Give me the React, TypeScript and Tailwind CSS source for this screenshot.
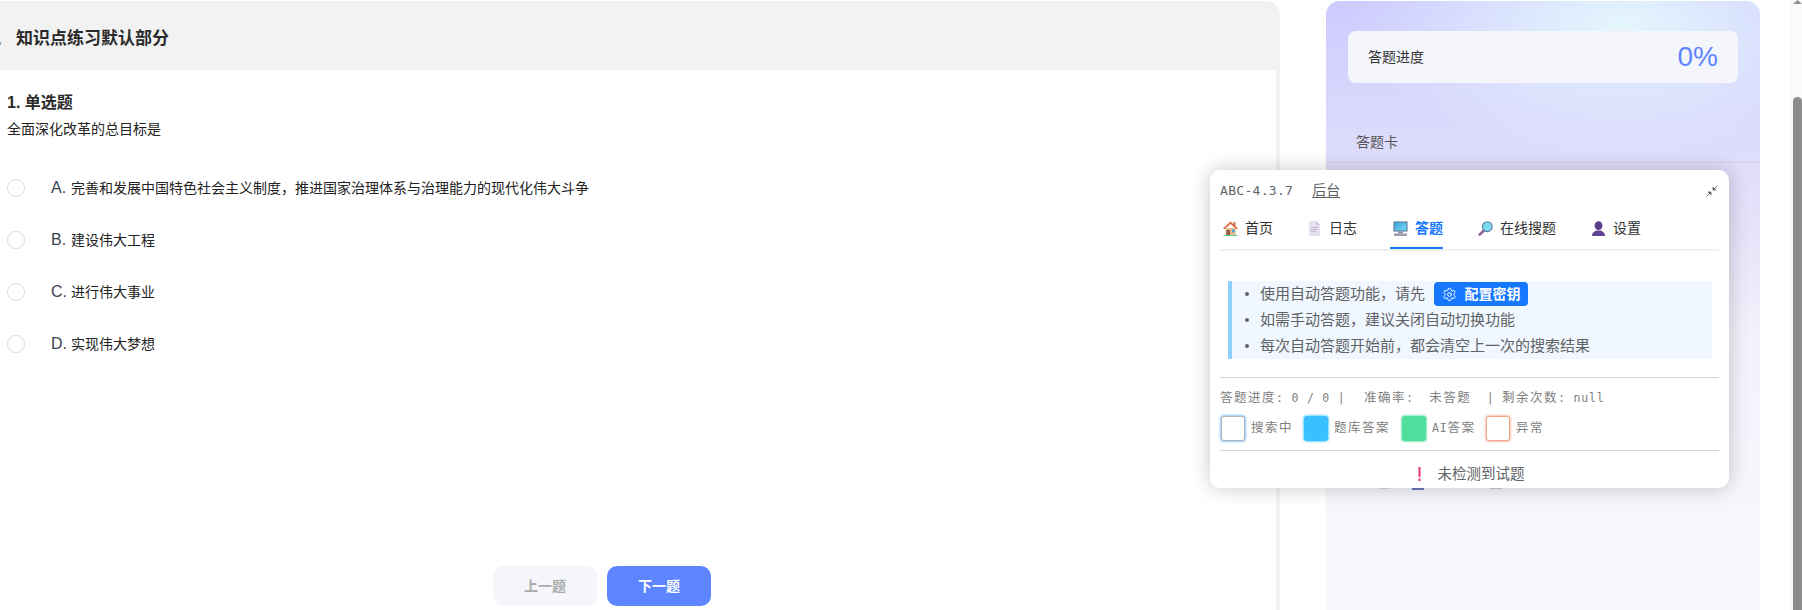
import { Settings } from 'lucide-react';

const sans = "font-['Liberation_Sans','Noto_Sans_CJK_SC',sans-serif]";
const mono = "font-['DejaVu_Sans_Mono','Noto_Sans_CJK_SC',monospace]";

const options = [
  { label: 'A.', text: '完善和发展中国特色社会主义制度，推进国家治理体系与治理能力的现代化伟大斗争' },
  { label: 'B.', text: '建设伟大工程' },
  { label: 'C.', text: '进行伟大事业' },
  { label: 'D.', text: '实现伟大梦想' },
];

function HouseIcon() {
  return (
    <svg width="15" height="15" viewBox="0 0 15 15">
      <rect x="0.5" y="13.8" width="14" height="1.2" fill="#5fd38a" />
      <rect x="10.5" y="1" width="2" height="4" fill="#c9744f" />
      <path d="M2.5 7h10v7h-10z" fill="#ecb88e" />
      <path d="M0 7.5L7.5 0.5L15 7.5L13.4 8.2L7.5 3L1.6 8.2z" fill="#de6a44" />
      <rect x="3.5" y="9" width="3.5" height="5" fill="#8a5a44" />
      <rect x="9" y="8.5" width="2.8" height="2.8" fill="#4aa8e0" />
    </svg>
  );
}

function DocIcon() {
  return (
    <svg width="15" height="15" viewBox="0 0 15 15">
      <path d="M2 0h7l4 4v11H2z" fill="#e6e0f0" />
      <path d="M9 0l4 4H9z" fill="#cfc6e0" />
      <path d="M4 6.5h7M4 8.5h7M4 10.5h5" stroke="#c3bad6" strokeWidth="1" />
    </svg>
  );
}

function MonitorIcon() {
  return (
    <svg width="15" height="15" viewBox="0 0 15 15">
      <defs>
        <linearGradient id="screen" x1="0" y1="0" x2="1" y2="1">
          <stop offset="0" stopColor="#3fa6dc" />
          <stop offset="1" stopColor="#7ad6f6" />
        </linearGradient>
      </defs>
      <rect x="0.5" y="0.5" width="14" height="10" fill="#4a6f8c" />
      <rect x="1.5" y="1.5" width="12" height="8" fill="url(#screen)" />
      <path d="M5 10.5h5v2H5z" fill="#8d93a8" />
      <rect x="1" y="12.5" width="13" height="2.5" fill="#9a9cb2" />
    </svg>
  );
}

function SearchIcon() {
  return (
    <svg width="15" height="15" viewBox="0 0 15 15">
      <path d="M6 9.5L1.6 13.6" stroke="#9a5da0" strokeWidth="2.6" strokeLinecap="round" />
      <circle cx="9.3" cy="5.7" r="4.9" fill="#7ad8f0" stroke="#5a7f9c" strokeWidth="1.1" />
    </svg>
  );
}

function PersonIcon() {
  return (
    <svg width="15" height="15" viewBox="0 0 15 15">
      <ellipse cx="7.5" cy="4.6" rx="3.9" ry="4.4" fill="#5a3d8a" />
      <path d="M1 15c0-3.2 2.5-4.6 4.5-5.4h4c2 .8 4.5 2.2 4.5 5.4z" fill="#5f4392" />
    </svg>
  );
}

const tabs = [
  { label: '首页', icon: <HouseIcon />, width: 'w-[84px]' },
  { label: '日志', icon: <DocIcon />, width: 'w-[86px]' },
  { label: '答题', icon: <MonitorIcon />, width: 'w-[85px]', active: true },
  { label: '在线搜题', icon: <SearchIcon />, width: 'w-[113px]' },
  { label: '设置', icon: <PersonIcon />, width: 'w-[60px]' },
];

const legend = [
  { label: <>搜索中</>, box: 'bg-white border-[#b4b4b4] shadow-[0_0_2px_1px_#8fc7ff]', width: 'w-[83px]' },
  { label: <>题库答案</>, box: 'bg-[#39c0ff] border-[#39c0ff] shadow-[0_0_2px_1px_#7fd6ff]', width: 'w-[98px]' },
  { label: <><Latin>AI</Latin>答案</>, box: 'bg-[#50de9c] border-[#50de9c] shadow-[0_0_2px_1px_#8ce8bd]', width: 'w-[84px]' },
  { label: <>异常</>, box: 'bg-white border-[#f4a58c] shadow-[0_0_2px_1px_#fac4b2]', width: 'w-[60px]' },
];

function Latin({ children }: { children: React.ReactNode }) {
  return <span className="text-[11.5px] tracking-[0.8px]">{children}</span>;
}

function Question() {
  return (
    <div className="relative flex h-[610px] w-[1280px] shrink-0 flex-col pt-px">
      <div className="flex h-[69px] shrink-0 items-center rounded-tr-[14px] bg-[#f2f2f2] pt-[7px] pl-[16px] text-[17px] font-bold text-[#2a2a2a]">
        知识点练习默认部分
      </div>
      <span className="absolute top-[42px] left-0 h-[3px] w-px bg-[#7fa8c8]" />
      <div className="flex min-h-0 flex-1 flex-col border-r-4 border-[#f2f2f2] bg-white pl-[7px]">
        <div className="mt-[23px] text-[16px] leading-[20px] font-bold text-[#2a2a2a]">1. 单选题</div>
        <div className="mt-[7px] text-[14px] leading-[18px] text-[#222]">全面深化改革的总目标是</div>
        <div className="mt-[24px] flex flex-col">
          {options.map((o) => (
            <div key={o.label} className="flex h-[52px] items-center">
              <span className="h-[18px] w-[18px] rounded-full border border-[#d9d9d9] bg-white" />
              <span className="ml-[26px] w-[20px] text-[16px] text-[#3a4252]">{o.label}</span>
              <span className="text-[14px] text-[#222]">{o.text}</span>
            </div>
          ))}
        </div>
        <div className="mt-auto mb-[4px] flex gap-[10px] pl-[486px]">
          <button className="h-[40px] w-[104px] rounded-[10px] bg-[#f5f6fb] text-[14px] font-bold text-[#aaa]">上一题</button>
          <button className="h-[40px] w-[104px] rounded-[10px] bg-[#5c85ff] text-[14px] font-bold text-white">下一题</button>
        </div>
      </div>
    </div>
  );
}

function SidePanel() {
  return (
    <div className="ml-[46px] h-[610px] w-[434px] shrink-0 pt-px">
      <div className="h-full rounded-t-[14px] bg-[radial-gradient(270px_130px_at_68%_4%,#e4f6fd_0%,rgba(228,246,253,0)_100%),linear-gradient(to_bottom,#cdcbff_0px,#dedcfb_150px,#e6e3f9_230px,#f3f2fb_340px,#f8f8fe_100%)] pt-[30px]">
        <div className="mx-[22px] flex h-[52px] items-center justify-between rounded-[8px] bg-[#f5f6fb] px-[20px]">
          <span className="text-[14px] text-[#333]">答题进度</span>
          <span className="text-[28px] text-[#5c85ff]">0%</span>
        </div>
        <div className="mt-[49px] border-b border-[#cfd0e8] pb-[10px] pl-[30px] text-[14px] leading-[20px] text-[#555]">
          答题卡
        </div>
      </div>
    </div>
  );
}

function InfoRow({ children }: { children: React.ReactNode }) {
  return (
    <div className="flex h-[26px] items-center">
      <span className="mr-[11px] h-[4px] w-[4px] rounded-full bg-[#606266]" />
      {children}
    </div>
  );
}

function Popup() {
  return (
    <div className={`absolute top-[170px] left-[1210px] h-[318px] w-[519px] rounded-[10px] bg-white px-[10px] shadow-[0_0_20px_rgba(0,0,0,0.22)] ${sans}`}>
      <div className="flex h-[41px] items-center text-[14px] text-[#606266]">
        <span className={`${mono} text-[13px] tracking-[0.3px]`}>ABC-4.3.7</span>
        <span className="ml-[19px] underline underline-offset-2">后台</span>
        <svg className="mr-px ml-auto" width="12" height="12" viewBox="0 0 12 12" fill="#606266" stroke="#606266" strokeWidth="0.8">
          <path d="M7 5V2L10 5z" />
          <path d="M8 4L11.5 0.5" />
          <path d="M5 7V10L2 7z" />
          <path d="M4 8L0.5 11.5" />
        </svg>
      </div>
      <div className="flex h-[40px] items-start border-b-2 border-[#eff0f3] text-[14px] text-[#303133]">
        {tabs.map((t) => (
          <div key={t.label} className={`relative flex h-[38px] items-center gap-[7px] pb-[4px] pl-[3px] ${t.width} ${t.active ? 'font-bold text-[#1677ff]' : ''}`}>
            {t.icon}
            <span>{t.label}</span>
            {t.active && <span className="absolute bottom-0 left-0 h-[2px] w-[53px] bg-[#1677ff]" />}
          </div>
        ))}
      </div>
      <div className="mt-[30px] ml-[8px] w-[484px] border-l-4 border-[#91d0ff] bg-[#f0f7fe] pl-[13px] text-[15px] text-[#606266]">
        <InfoRow>
          <span>使用自动答题功能，请先</span>
          <span className="ml-[9px] flex h-[24px] w-[94px] items-center justify-center gap-[8px] rounded-[4px] bg-[#1677ff] text-[14px] font-bold text-white">
            <Settings size={15} strokeWidth={1.6} />
            配置密钥
          </span>
        </InfoRow>
        <InfoRow>
          <span>如需手动答题，建议关闭自动切换功能</span>
        </InfoRow>
        <InfoRow>
          <span>每次自动答题开始前，都会清空上一次的搜索结果</span>
        </InfoRow>
      </div>
      <div className={`mt-[18px] border-t border-[#d4d4d4] pt-[12px] ${mono} text-[12.5px] leading-[16px] tracking-[1.5px] whitespace-pre text-[#808080]`}>
        答题进度<Latin>: 0 / 0 |  </Latin><span className="ml-[3px]">准确率</span><Latin>:  </Latin>未答题<Latin>  | </Latin>剩余次数<Latin>: null</Latin>
      </div>
      <div className={`mt-[9px] ml-px flex h-[27px] items-center ${mono} text-[12.5px] tracking-[1.5px] text-[#808080]`}>
        {legend.map((l, i) => (
          <div key={i} className={`flex items-center gap-[6px] ${l.width}`}>
            <span className={`h-[25px] w-[24px] shrink-0 rounded-[3px] border ${l.box}`} />
            <span>{l.label}</span>
          </div>
        ))}
      </div>
      <div className="mt-[8px] flex items-center justify-center border-t border-[#d4d4d4] pt-[13px] pl-[3px] text-[14.5px] leading-[20px] text-[#606266]">
        <svg className="mr-[17px]" width="3" height="14" viewBox="0 0 3 14">
          <rect x="0.5" y="0" width="2" height="10" fill="#f0306a" />
          <rect x="0.5" y="11.5" width="2" height="2.5" fill="#f0306a" />
        </svg>
        未检测到试题
      </div>
    </div>
  );
}

export default function App() {
  return (
    <div className={`relative flex h-[610px] w-[1802px] overflow-hidden bg-white ${sans}`}>
      <Question />
      <SidePanel />
      <div className="relative ml-[30px] flex h-full w-[12px] flex-col bg-[#fafafa] pt-[97px] pl-[3px]">
        <svg className="absolute top-0 left-[3px]" width="9" height="4" viewBox="0 0 9 4">
          <path d="M4.5 0L9 4H0z" fill="#8c8c8c" />
        </svg>
        <div className="h-[513px] w-[9px] rounded-t-full bg-[#8c8c8c]" />
      </div>
      <span className="absolute top-[488px] left-[1380px] h-px w-[10px] bg-[#d8d8e4]" />
      <span className="absolute top-[488px] left-[1412px] h-[2px] w-[12px] bg-[#6a78b8]" />
      <span className="absolute top-[488px] left-[1490px] h-px w-[12px] bg-[#c8c8d0]" />
      <Popup />
    </div>
  );
}
